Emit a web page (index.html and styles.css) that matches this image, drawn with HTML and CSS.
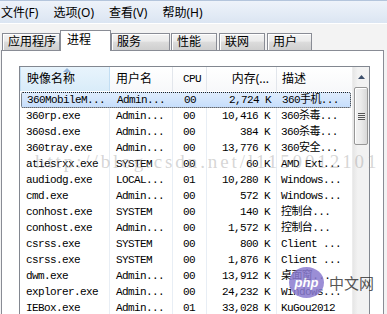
FILE: index.html
```html
<!DOCTYPE html>
<html lang="zh-CN">
<head>
  <meta charset="UTF-8" />
  <title>Windows 任务管理器</title>
  <link rel="stylesheet" href="styles.css">
</head>
<body>
  <div class="window">
    <div class="menubar">
      <span class="menu-item">文件(F)</span>
      <span class="menu-item">选项(O)</span>
      <span class="menu-item">查看(V)</span>
      <span class="menu-item">帮助(H)</span>
    </div>

    <div class="tabs">
      <div class="tab t-apps">应用程序</div>
      <div class="tab active t-proc">进程</div>
      <div class="tab t-svc">服务</div>
      <div class="tab t-perf">性能</div>
      <div class="tab t-net">联网</div>
      <div class="tab t-user">用户</div>
    </div>

    <div class="panel">
      <div class="listview">
        <div class="list-main">
          <div class="header">
            <div class="hcell c-name sorted">映像名称<span class="sort-arrow"></span></div>
            <div class="hcell c-user">用户名</div>
            <div class="hcell c-cpu mono">CPU</div>
            <div class="hcell c-mem">内存(...</div>
            <div class="hcell c-desc">描述</div>
          </div>
          <div class="rows">
            <div class="row selected">
              <span class="c-name">360MobileM...</span><span class="c-user">Admin...</span><span class="c-cpu">00</span><span class="c-mem">2,724 K</span><span class="c-desc">360手机...</span>
            </div>
            <div class="row">
              <span class="c-name">360rp.exe</span><span class="c-user">Admin...</span><span class="c-cpu">00</span><span class="c-mem">10,416 K</span><span class="c-desc">360杀毒...</span>
            </div>
            <div class="row">
              <span class="c-name">360sd.exe</span><span class="c-user">Admin...</span><span class="c-cpu">00</span><span class="c-mem">384 K</span><span class="c-desc">360杀毒...</span>
            </div>
            <div class="row">
              <span class="c-name">360tray.exe</span><span class="c-user">Admin...</span><span class="c-cpu">00</span><span class="c-mem">13,776 K</span><span class="c-desc">360安全...</span>
            </div>
            <div class="row">
              <span class="c-name">atiesrxx.exe</span><span class="c-user">SYSTEM</span><span class="c-cpu">00</span><span class="c-mem">60 K</span><span class="c-desc">AMD Ext...</span>
            </div>
            <div class="row">
              <span class="c-name">audiodg.exe</span><span class="c-user">LOCAL...</span><span class="c-cpu">01</span><span class="c-mem">10,280 K</span><span class="c-desc">Windows...</span>
            </div>
            <div class="row">
              <span class="c-name">cmd.exe</span><span class="c-user">Admin...</span><span class="c-cpu">00</span><span class="c-mem">572 K</span><span class="c-desc">Windows...</span>
            </div>
            <div class="row">
              <span class="c-name">conhost.exe</span><span class="c-user">SYSTEM</span><span class="c-cpu">00</span><span class="c-mem">140 K</span><span class="c-desc">控制台...</span>
            </div>
            <div class="row">
              <span class="c-name">conhost.exe</span><span class="c-user">Admin...</span><span class="c-cpu">00</span><span class="c-mem">1,572 K</span><span class="c-desc">控制台...</span>
            </div>
            <div class="row">
              <span class="c-name">csrss.exe</span><span class="c-user">SYSTEM</span><span class="c-cpu">00</span><span class="c-mem">800 K</span><span class="c-desc">Client ...</span>
            </div>
            <div class="row">
              <span class="c-name">csrss.exe</span><span class="c-user">SYSTEM</span><span class="c-cpu">00</span><span class="c-mem">1,876 K</span><span class="c-desc">Client ...</span>
            </div>
            <div class="row">
              <span class="c-name">dwm.exe</span><span class="c-user">Admin...</span><span class="c-cpu">00</span><span class="c-mem">13,912 K</span><span class="c-desc">桌面窗...</span>
            </div>
            <div class="row">
              <span class="c-name">explorer.exe</span><span class="c-user">Admin...</span><span class="c-cpu">00</span><span class="c-mem">24,232 K</span><span class="c-desc">Windows...</span>
            </div>
            <div class="row">
              <span class="c-name">IEBox.exe</span><span class="c-user">Admin...</span><span class="c-cpu">01</span><span class="c-mem">33,028 K</span><span class="c-desc">KuGou2012</span>
            </div>
          </div>
        </div>

        <div class="scrollbar">
          <div class="sb-up">
            <svg width="7" height="4" viewBox="0 0 7 4"><path d="M3.5 0 L7 4 L0 4 Z" fill="#3d4f6b"/></svg>
          </div>
          <div class="sb-thumb">
            <span class="grip"></span>
          </div>
        </div>
      </div>
    </div>

    <div class="watermark">http://blog.csdn.net/l1150012101</div>

    <div class="php-logo">
      <span class="php-oval">php</span>
      <span class="php-cn">中文网</span>
    </div>
  </div>
</body>
</html>
```

FILE: styles.css
```css
* {
  box-sizing: border-box;
}
body {
  margin: 0;
  background: #f3f3f3;
  font-family: "Noto Sans", "Noto Sans CJK SC", sans-serif;
  font-size: 12px;
  color: #000;
  overflow: hidden;
}
.window {
  position: relative;
  width: 387px;
  height: 314px;
  overflow: hidden;
}

/* menu */
.menubar {
  height: 24px;
  border-top: 1px solid #b4c5dc;
  border-bottom: 1px solid #fff;
  background: linear-gradient(#eef3fa, #dbe5f2);
  display: flex;
  align-items: center;
  padding: 1px 0 0 1px;
  gap: 15px;
  line-height: 16px;
}

/* tabs */
.tabs {
  height: 26px;
  display: flex;
  align-items: flex-end;
  padding-left: 2px;
  position: relative;
  z-index: 2;
}
.tab {
  height: 17px;
  border: 1px solid #898c95;
  border-bottom: none;
  background: linear-gradient(#f3f3f3, #ebebeb 45%, #dcdcdc 50%, #cfcfcf);
  box-shadow: inset 1px 1px 0 #fff;
  padding: 0 0 0 5px;
  line-height: 15px;
  white-space: nowrap;
}
.tab.active {
  height: 21px;
  margin-bottom: -1px;
  background: #fff;
  box-shadow: none;
  padding: 1px 0 0 6px;
}
.t-apps { width: 58px; }
.t-proc { width: 51px; }
.t-svc { width: 59px; }
.t-perf { width: 46px; margin-left: 1px; }
.t-net { width: 46px; margin-left: 2px; }
.t-user { width: 45px; margin-left: 2px; }

/* panel */
.panel {
  margin-left: 1px;
  width: 383px;
  height: 280px;
  border: 1px solid #898c95;
  background: #fff;
  padding: 15px 0 0 17px;
}
.listview {
  width: 351px;
  height: 260px;
  border: 1px solid #828790;
  display: flex;
}
.list-main {
  width: 332px;
}
.mono,
.rows {
  font-family: "Liberation Mono", "Noto Sans CJK SC", monospace;
  font-size: 11px;
  letter-spacing: -0.6px;
}

.header {
  display: grid;
  grid-template-columns: 90px 63px 34px 70px 75px;
  height: 24px;
}
.hcell {
  position: relative;
  border-right: 1px solid #e2e6ec;
  background: linear-gradient(#fff, #f7f8fa);
  line-height: 24px;
  padding-left: 6px;
}
.hcell.sorted {
  background: linear-gradient(#e8f4fc, #d9ecf9);
  border-left: 1px solid #c2def3;
  border-right: 1px solid #c2def3;
}
.sort-arrow {
  position: absolute;
  left: 42px;
  top: 1px;
  width: 0;
  height: 0;
  border-left: 4px solid transparent;
  border-right: 4px solid transparent;
  border-bottom: 4px solid #97b8dc;
}
.hcell.c-cpu { padding-left: 10px; }
.hcell.c-mem { padding-left: 16px; }
.hcell.c-desc { padding-left: 5px; border-right: none; }

.rows {
  padding-top: 1px;
  background:
    linear-gradient(90deg, transparent 89px, #e8eef5 89px, #e8eef5 90px, transparent 90px,
      transparent 152px, #e8eef5 152px, #e8eef5 153px, transparent 153px,
      transparent 186px, #e8eef5 186px, #e8eef5 187px, transparent 187px,
      transparent 256px, #e8eef5 256px, #e8eef5 257px, transparent 257px);
  height: 240px;
}
.row {
  display: grid;
  grid-template-columns: 90px 63px 34px 70px 75px;
  height: 16px;
  line-height: 16px;
  white-space: nowrap;
}
.row.selected {
  margin: 0 1px;
  grid-template-columns: 89px 63px 34px 70px 74px;
  background: linear-gradient(#dfecfc, #c6defc);
  border: 1px dotted #222;
  border-radius: 2px;
  line-height: 14px;
}
.row.selected .c-name { padding-left: 5px; }
.c-name { padding-left: 6px; }
.c-user { padding-left: 6px; }
.c-cpu { padding-left: 10px; }
.c-mem { text-align: right; padding-right: 7px; }
.c-desc { padding-left: 4px; overflow: hidden; }

/* scrollbar */
.scrollbar {
  width: 17px;
  background: linear-gradient(90deg, #e6e6e6, #f2f2f2 30%, #f2f2f2);
  border-left: 1px solid #ececec;
  padding: 0 1px;
}
.sb-up {
  height: 19px;
  display: flex;
  align-items: center;
  justify-content: center;
}
.sb-thumb {
  margin-top: 1px;
  height: 58px;
  border: 1px solid #979797;
  border-radius: 2px;
  background: linear-gradient(90deg, #f2f2f2, #ebebeb 50%, #d8d8d8);
  box-shadow: inset 1px 1px 0 #fff;
  display: flex;
  align-items: center;
  justify-content: center;
}
.grip {
  width: 7px;
  height: 7px;
  background: repeating-linear-gradient(#555 0 1px, #eee 1px 2px);
}

/* overlays */
.watermark {
  position: absolute;
  left: 35px;
  top: 151px;
  font-family: "Liberation Serif", serif;
  font-size: 19px;
  letter-spacing: 2.9px;
  color: rgba(150, 150, 150, 0.4);
  white-space: nowrap;
}
.php-logo {
  position: absolute;
  left: 289px;
  top: 267px;
  display: flex;
  align-items: center;
  gap: 5px;
}
.php-oval {
  width: 35px;
  height: 31px;
  border-radius: 50%;
  background: #8a7bd0;
  color: #fff;
  font-family: "Liberation Sans", sans-serif;
  font-weight: bold;
  font-style: italic;
  font-size: 13px;
  display: flex;
  align-items: center;
  justify-content: center;
  opacity: 0.85;
}
.php-cn {
  font-family: "Noto Sans CJK SC", sans-serif;
  font-size: 15px;
  color: rgba(40, 40, 40, 0.8);
}
```
